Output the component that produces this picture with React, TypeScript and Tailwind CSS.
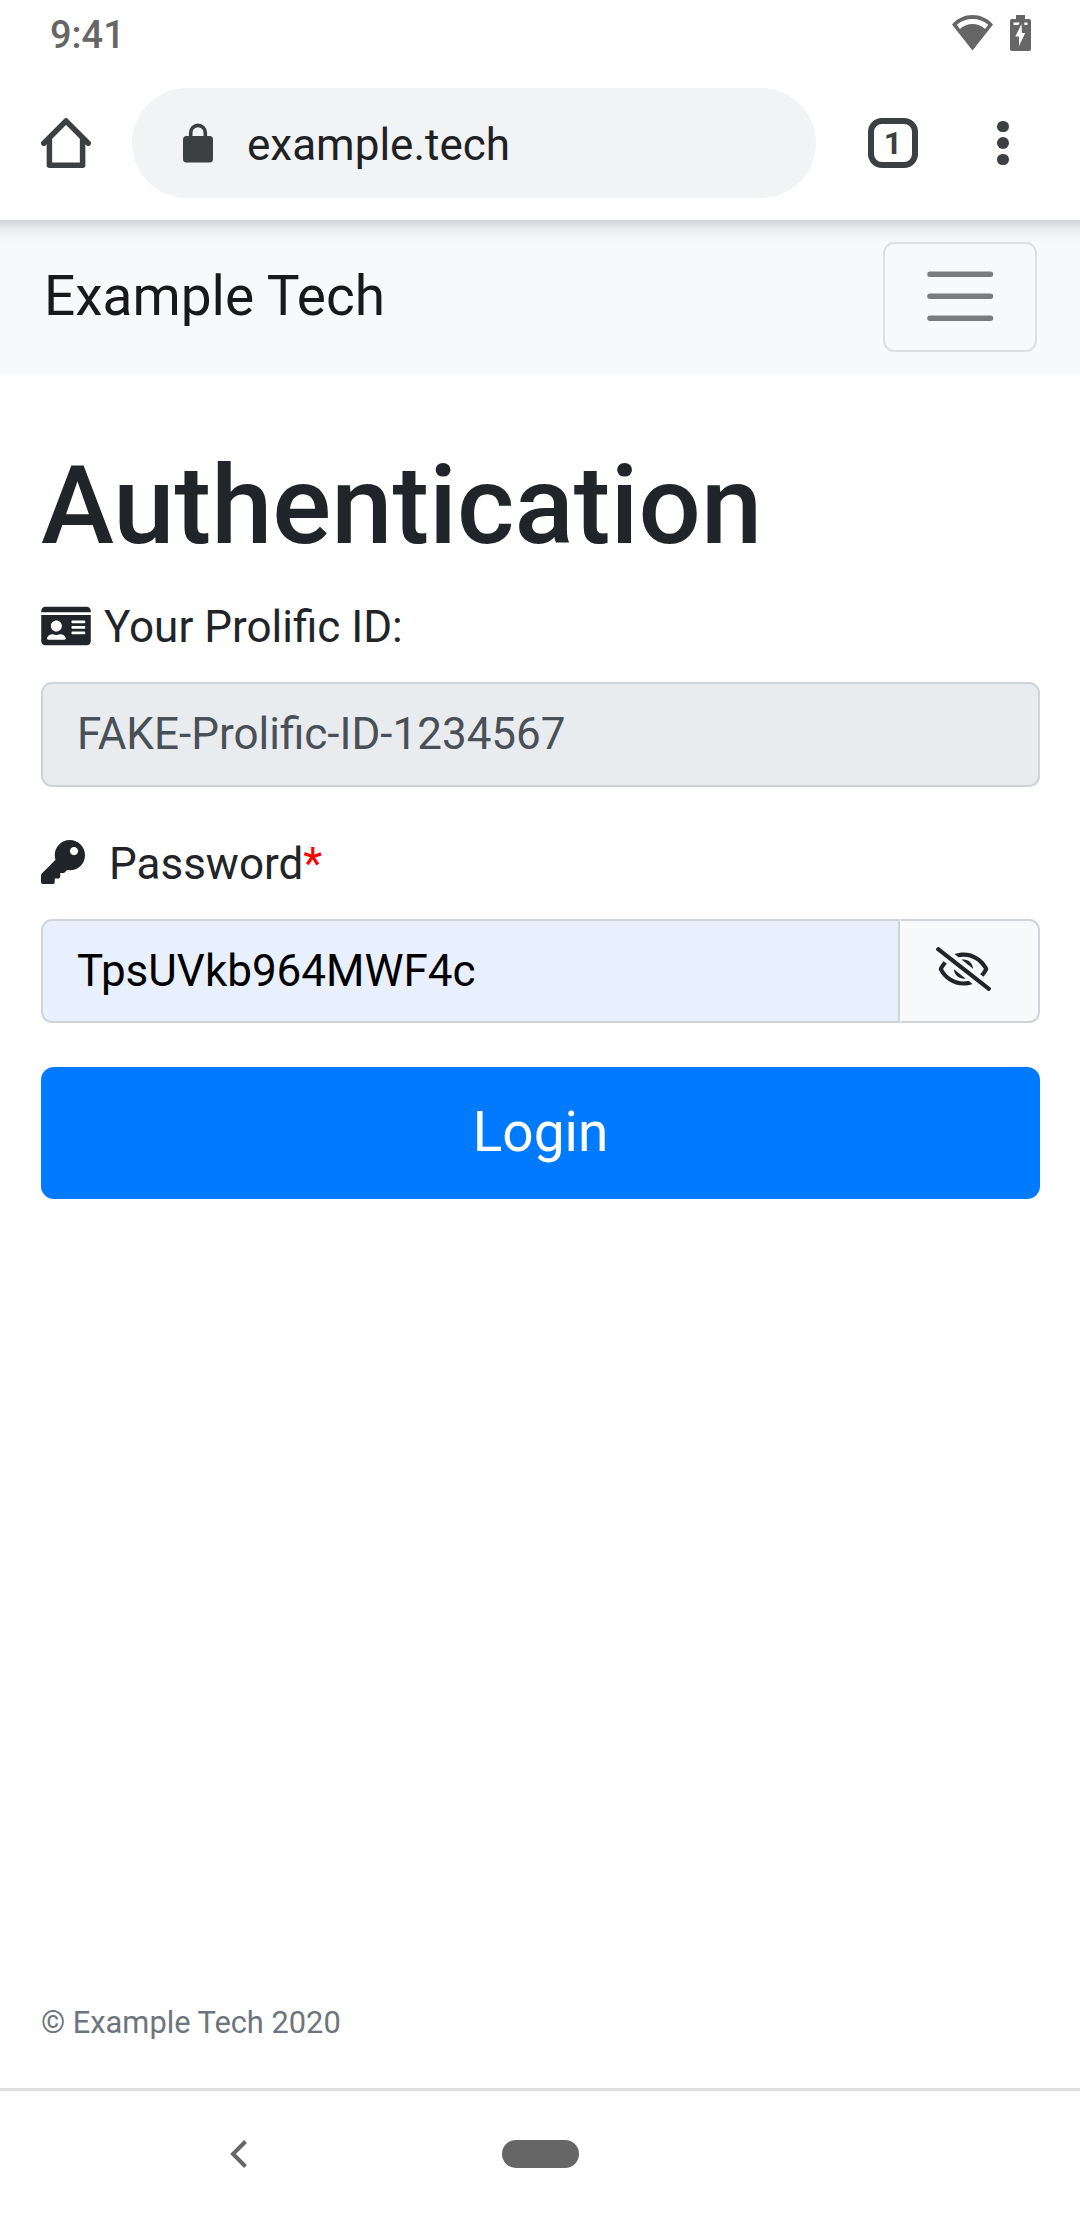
import { FaIdCard, FaKey, FaRegEyeSlash } from "react-icons/fa";

function StatusBar() {
  return (
    <div className="flex h-[66px] items-start justify-between pl-[50px] pr-[49px] text-[#666666]">
      <span className="mt-[13px] text-[38px] font-medium leading-[45px]">9:41</span>
      <div className="mt-[15px] flex gap-[17px]">
        <svg width="41" height="36" viewBox="0 0 41 36" fill="currentColor">
          <path fillRule="evenodd" d="M20.5 35.5 0 9.5C5.500 3.200 13 0 20.500 0S35.500 3.200 41 9.500ZM7.800 14C11.500 10.500 16 9 20.500 9s9 1.500 12.700 5l3-4.300C31.800 6 26.500 4 20.500 4S9.200 6 4.800 9.700Z" />
        </svg>
        <svg width="21" height="36" viewBox="0 0 21 36" fill="currentColor">
          <path fillRule="evenodd" d="M6 0h9v4h4q2 0 2 2v28q0 2-2 2H2q-2 0-2-2V6q0-2 2-2h4ZM11.500 9 5.300 21.500H9V31l6.200-13H12ZM3.500 7.500v2.500h5l1.200-2.500ZM14.300 7.500v2.500h3.200V7.500Z" />
        </svg>
      </div>
    </div>
  );
}

function BrowserBar() {
  return (
    <div className="flex h-[154px] items-start pt-[22px] text-[#3c4043]">
      <div className="flex h-[110px] w-[132px] items-center pl-[41px]">
        <svg width="50" height="50" viewBox="0 0 50 50" fill="none" stroke="currentColor" strokeWidth="5.500" strokeLinecap="round" strokeLinejoin="round">
          <path d="M2.800 25.200 25 3l22.200 22.200" />
          <path d="M8.400 21v26.200h33.200V21" />
        </svg>
      </div>
      <div className="flex h-[110px] w-[684px] items-center rounded-full bg-[#f1f3f4] pl-[51px]">
        <svg width="30" height="40" viewBox="0 0 30 40" className="-mt-px">
          <rect y="13" width="30" height="26.500" rx="3.500" fill="currentColor" />
          <path d="M7.700 15V9.700a7.300 7.300 0 0 1 14.600 0V15" fill="none" stroke="currentColor" strokeWidth="3.600" />
        </svg>
        <span className="ml-[34px] pt-[4px] text-[44px] leading-[52px] text-[#202124]">example.tech</span>
      </div>
      <div className="ml-[52px] mt-[30px] flex size-[50px] items-center justify-center rounded-[14px] border-[6px] border-current text-[32px] font-bold leading-none">
        1
      </div>
      <div className="ml-[79px] mt-[32.500px] flex flex-col gap-[5px]">
        <span className="size-[11.500px] rounded-full bg-current" />
        <span className="size-[11.500px] rounded-full bg-current" />
        <span className="size-[11.500px] rounded-full bg-current" />
      </div>
    </div>
  );
}

function Navbar() {
  return (
    <nav className="relative flex h-[154px] items-center justify-between bg-[#f8f9fb] pl-[44px] pr-[43px]">
      <div className="absolute inset-x-0 top-0 h-[22px] bg-[linear-gradient(to_bottom,rgba(0,0,0,0.15),rgba(0,0,0,0.05)_45%,rgba(0,0,0,0))]" />
      <span className="pb-[3px] text-[55px] leading-[82px] text-[#19191a]">Example Tech</span>
      <button className="flex h-[110px] w-[154px] items-center justify-center rounded-[11px] border-2 border-black/10">
        <svg width="82.500" height="82.500" viewBox="0 0 30 30" className="mb-px">
          <path d="M4 7h22M4 15h22M4 23h22" stroke="rgba(0,0,0,0.5)" strokeWidth="2" strokeLinecap="round" />
        </svg>
      </button>
    </nav>
  );
}

export default function App() {
  return (
    <div className="flex h-[2220px] w-[1080px] flex-col overflow-hidden bg-white font-['Roboto',sans-serif] text-[#212529]">
      <StatusBar />
      <BrowserBar />
      <Navbar />
      <main className="flex flex-1 flex-col pl-[41px] pr-[40px] pt-[66px]">
        <h1 className="text-[110px] font-medium leading-[132px]">Authentication</h1>
        <label className="mt-[22px] flex h-[66px] items-center text-[44px] leading-[66px]">
          <FaIdCard className="mb-[3px] mr-[13px] h-[44px] w-[50px]" />
          Your Prolific ID:
        </label>
        <div className="mt-[22px] flex h-[105px] items-center rounded-[11px] border-2 border-[#ced4da] bg-[#e9ecef] pb-px pl-[34px] text-[44px] leading-[66px] text-[#495057]">
          FAKE-Prolific-ID-1234567
        </div>
        <label className="mt-[44px] flex h-[66px] items-center text-[44px] leading-[66px]">
          <FaKey className="mb-[4px] mr-[24px] size-[44px]" />
          <span>
            Password<span className="text-[#ff0000]">*</span>
          </span>
        </label>
        <div className="mt-[22px] flex h-[104px]">
          <div className="flex flex-1 items-center rounded-l-[11px] border-2 border-[#ced4da] bg-[#e8f0fe] pl-[34px] text-[44px] leading-[66px] text-black">
            TpsUVkb964MWF4c
          </div>
          <button className="ml-px flex w-[139px] items-center rounded-r-[11px] border-2 border-l-0 border-[#ced4da] bg-[#f8f9fa] pb-[4px] pl-[35px]">
            <FaRegEyeSlash className="h-[44px] w-[55px]" />
          </button>
        </div>
        <button className="mt-[44px] flex h-[132px] shrink-0 items-center justify-center rounded-[13px] bg-[#007bff] pb-[3px] text-[55px] leading-[82px] text-white">
          Login
        </button>
        <footer className="mb-[42px] mt-auto text-[30.800px] leading-[46px] text-[#6c757d]">© Example Tech 2020</footer>
      </main>
      <div className="flex h-[132px] items-center border-t-[3px] border-[#dfdfdf] pb-[3px]">
        <svg width="17" height="28" viewBox="0 0 17 28" className="ml-[230px]">
          <path d="M15.500 1.500 3 14l12.500 12.500" fill="none" stroke="#666666" strokeWidth="4" />
        </svg>
        <div className="ml-[255px] h-[28px] w-[77px] rounded-full bg-[#666666]" />
      </div>
    </div>
  );
}
